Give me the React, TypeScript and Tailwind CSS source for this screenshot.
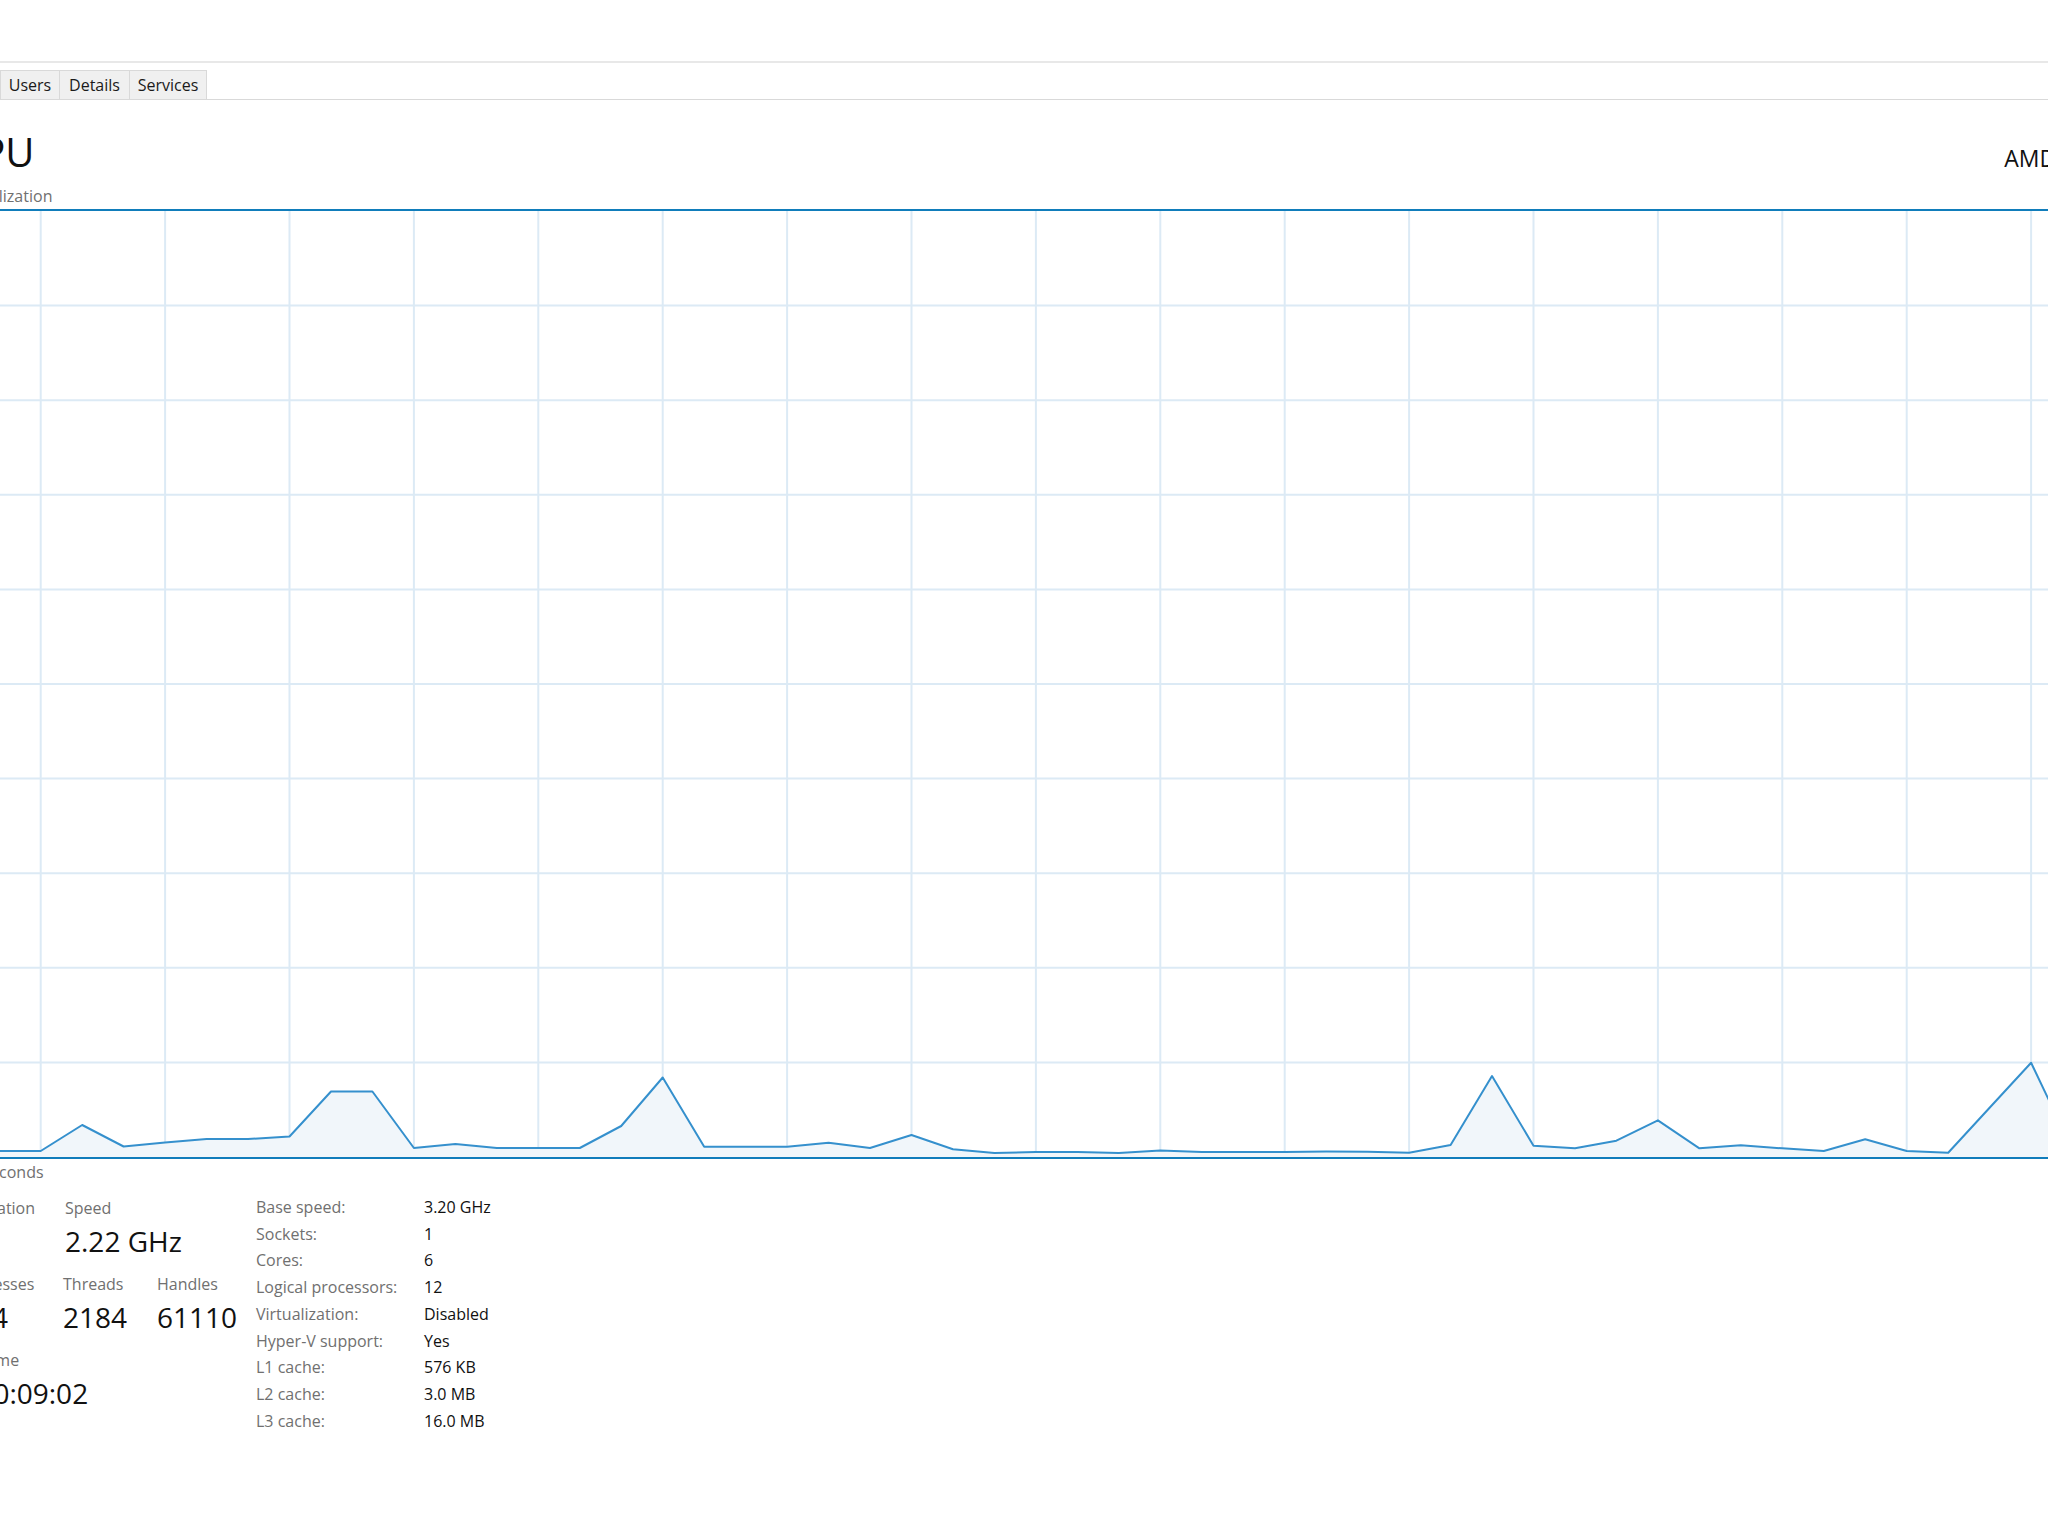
import React from "react";

// CPU history samples (page y, px); one sample every third of a grid column
const samples = [
  1151, 1151, 1151, 1125, 1146.5, 1142.5, 1139, 1139, 1136.5, 1091.5, 1091.5,
  1148, 1144, 1148, 1148, 1148, 1126, 1077.5, 1146.7, 1146.7, 1146.7, 1142.8,
  1148, 1135, 1149.3, 1153, 1152, 1152, 1153, 1150.6, 1152, 1152, 1152, 1151.5,
  1151.7, 1152.7, 1145, 1076, 1145.7, 1148.3, 1140.7, 1120.3, 1148.3, 1145.3,
  1148.3, 1151, 1139.3, 1151, 1152.7, 1107.7, 1062.7, 1150, 1150, 1150,
];

const GRAPH_W = 2446;
const GRAPH_H = 946;
const GRID_X0 = 78.7;
const COL = 124.4;
const STEP = COL / 3;

const CpuGraph: React.FC = () => {
  const vLines: number[] = [];
  for (let k = -1; k * COL + GRID_X0 < GRAPH_W; k++) vLines.push(GRID_X0 + k * COL);
  const hLines = [1, 2, 3, 4, 5, 6, 7, 8, 9].map((k) => (GRAPH_H / 10) * k);

  const pts = samples.map((y, i) => [GRID_X0 + STEP * (i - 2), y - 211]);
  const line = pts.map(([x, y]) => `${x.toFixed(1)},${y.toFixed(1)}`).join(" ");
  const first = pts[0][0].toFixed(1);
  const last = pts[pts.length - 1][0].toFixed(1);
  const area = `${first},${GRAPH_H} ${line} ${last},${GRAPH_H}`;

  return (
    <svg className="block" width={GRAPH_W} height={GRAPH_H}>
      {hLines.map((y) => (
        <line key={`h${y}`} x1={0} x2={GRAPH_W} y1={y} y2={y} stroke="#dceaf5" strokeWidth={2} />
      ))}
      {vLines.map((x) => (
        <line key={`v${x}`} x1={x} x2={x} y1={0} y2={GRAPH_H} stroke="#dceaf5" strokeWidth={2} />
      ))}
      <polygon points={area} fill="#f1f6fa" />
      <polyline points={line} fill="none" stroke="#3590cd" strokeWidth={2} strokeLinejoin="round" />
    </svg>
  );
};

const Tab: React.FC<{ label: string; w: string; first?: boolean }> = ({ label, w, first }) => (
  <div
    className={`flex h-[29px] items-center justify-center border-t border-r border-[#d9d9d9] bg-[#f0f0f0] text-[16px] text-[#1a1a1a] ${w} ${
      first ? "border-l" : ""
    }`}
  >
    {label}
  </div>
);

const details: [string, string][] = [
  ["Base speed:", "3.20 GHz"],
  ["Sockets:", "1"],
  ["Cores:", "6"],
  ["Logical processors:", "12"],
  ["Virtualization:", "Disabled"],
  ["Hyper-V support:", "Yes"],
  ["L1 cache:", "576 KB"],
  ["L2 cache:", "3.0 MB"],
  ["L3 cache:", "16.0 MB"],
];

export default function App() {
  return (
    <div className="h-[1536px] w-[2048px] overflow-hidden bg-white font-['Open_Sans',sans-serif] text-[#111]">
      <div className="h-[61px]" />
      <div className="h-[2px] bg-[#e8e8e8]" />

      {/* tab strip */}
      <div className="mt-[7px] flex border-b border-[#d9d9d9]">
        <Tab label="Users" w="w-[60px]" first />
        <Tab label="Details" w="w-[70px]" />
        <Tab label="Services" w="w-[77px]" />
      </div>

      <div className="-ml-[40px] w-[2450px]">
        {/* title */}
        <div className="mt-[28px] flex items-baseline justify-between">
          <div className="-ml-[4px] text-[40px] leading-[48px]">CPU</div>
          <div className="text-[23px] leading-[30px]">AMD Ryzen 5 2600 Six-Core Processor</div>
        </div>
        <div className="mt-[10px] flex justify-between text-[16px] leading-[20px] text-[#707070]">
          <span>% Utilization</span>
          <span>100%</span>
        </div>

        {/* graph */}
        <div className="mt-[3px] border-x-2 border-y-2 border-[#117dbb]">
          <CpuGraph />
        </div>
        <div className="mt-[3px] flex justify-between text-[16px] leading-[20px] text-[#707070]">
          <span>60 seconds</span>
          <span>0</span>
        </div>

        {/* stats */}
        <div className="mt-[16px] flex items-start">
          <div className="w-[296px]">
            <div className="flex text-[16px] leading-[20px] text-[#707070]">
              <span className="w-[105px]">Utilization</span>
              <span>Speed</span>
            </div>
            <div className="mt-[6px] flex text-[28px] leading-[34px]">
              <span className="w-[105px]">3%</span>
              <span>2.22 GHz</span>
            </div>
            <div className="mt-[16px] flex text-[16px] leading-[20px] text-[#707070]">
              <span className="w-[103px]">Processes</span>
              <span className="w-[94px]">Threads</span>
              <span>Handles</span>
            </div>
            <div className="mt-[6px] flex text-[28px] leading-[34px]">
              <span className="w-[103px]">234</span>
              <span className="w-[94px]">2184</span>
              <span>61110</span>
            </div>
            <div className="mt-[16px] text-[16px] leading-[20px] text-[#707070]">Up time</div>
            <div className="-ml-[6px] mt-[6px] text-[28px] leading-[34px]">0:00:09:02</div>
          </div>

          <div className="-mt-[4px] grid grid-cols-[168px_auto] text-[16px] leading-[26.7px]">
            {details.map(([k, v]) => (
              <React.Fragment key={k}>
                <span className="text-[#707070]">{k}</span>
                <span>{v}</span>
              </React.Fragment>
            ))}
          </div>
        </div>
      </div>
    </div>
  );
}
